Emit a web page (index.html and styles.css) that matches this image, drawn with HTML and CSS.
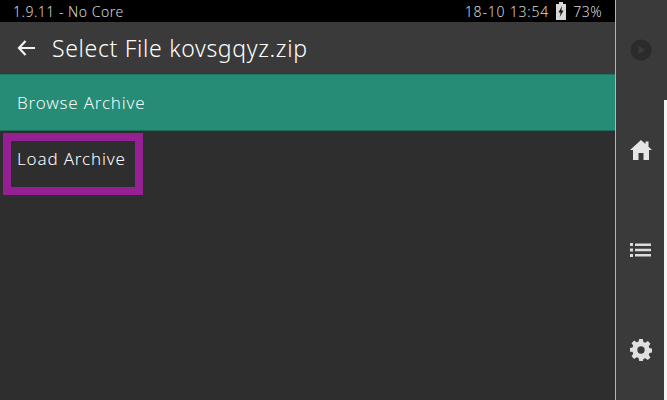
FILE: index.html
```html
<!DOCTYPE html>
<html lang="en">
<head>
  <meta charset="UTF-8">
  <title>Select File</title>
  <link rel="stylesheet" href="styles.css">
</head>
<body>
  <div class="main">
    <div class="status">
      <span>1.9.11 - No Core</span>
      <div class="status-right">
        <span class="clock">18-10 13:54</span>
        <svg class="battery" width="10" height="18" viewBox="0 0 10 18">
          <path d="M3 0h4v2h3v16H0V2h3z" fill="#d8d8d8"/>
          <path d="M6 4L2.500 10.500H4.600L3.800 15L7.500 8.500H5.300z" fill="#111"/>
        </svg>
        <span>73%</span>
      </div>
    </div>
    <div class="header">
      <svg class="back" width="18" height="16" viewBox="0 0 18 16">
        <path d="M18 8H2M8.500 1L2 8l6.500 7" fill="none" stroke="#f2f2f2" stroke-width="2.200"/>
      </svg>
      <span class="title">Select File kovsgqyz.zip</span>
    </div>
    <div class="row-selected">Browse Archive</div>
    <div class="list">
      <div class="row-focus">Load Archive</div>
    </div>
  </div>
  <div class="side">
    <div class="side-item play">
      <svg width="22" height="22" viewBox="0 0 22 22">
        <circle cx="11" cy="11" r="10.500" fill="#2b2b2b"/>
        <path d="M8.500 6.500v9l6.500-4.500z" fill="#3a3a3a"/>
      </svg>
    </div>
    <div class="side-item home">
      <svg width="22" height="20" viewBox="0 0 22 20">
        <path d="M11 0L0 10h3v10h5.500v-7h5v7H19V10h3l-3.500-3.200V1.500h-3v2.600z" fill="#e6e6e6"/>
      </svg>
    </div>
    <div class="side-item list-icon">
      <svg width="21" height="14" viewBox="0 0 21 14">
        <path d="M0 0h3v3H0zM0 5.500h3v3H0zM0 11h3v3H0zM5 .5h16v2.500H5zM5 5.800h16v2.500H5zM5 11h16v2.500H5z" fill="#dcdcdc"/>
      </svg>
    </div>
    <div class="side-item gear">
      <svg width="22" height="22" viewBox="0 0 24 24">
        <path fill="#e0e0e0" fill-rule="evenodd" d="M10 0h4l.6 3.300 2.100.9 2.800-1.900 2.800 2.800-1.900 2.800.9 2.100 3.300.6v4l-3.300.6-.9 2.100 1.900 2.800-2.800 2.800-2.800-1.900-2.100.9L14 24h-4l-.6-3.300-2.100-.9-2.800 1.900-2.800-2.800 1.900-2.800-.9-2.100L-.6 14v-4l3.300-.6.9-2.100L1.700 4.500l2.800-2.800 2.800 1.900 2.100-.9zM12 8a4 4 0 1 0 0 8 4 4 0 0 0 0-8z"/>
      </svg>
    </div>
    <div class="scrollbar"></div>
  </div>
</body>
</html>
```

FILE: styles.css
```css
html, body {
  margin: 0;
  height: 400px;
  overflow: hidden;
}

body {
  display: flex;
  font-family: "Noto Sans", sans-serif;
  font-weight: 300;
  color: #fff;
  background: #2e2e2e;
}

.main {
  width: 615px;
  height: 400px;
  display: flex;
  flex-direction: column;
}

.status {
  height: 22px;
  flex: none;
  background: #000;
  color: #d8d8d8;
  font-size: 14px;
  letter-spacing: 0.5px;
  padding: 0 13px;
  display: flex;
  align-items: center;
  justify-content: space-between;
}

.status-right {
  display: flex;
  align-items: center;
  gap: 7px;
}

.clock {
  letter-spacing: 0.8px;
}

.battery {
  display: block;
}

.header {
  height: 52px;
  flex: none;
  background: #3a3a3a;
  display: flex;
  align-items: center;
  padding-left: 17px;
  gap: 17px;
}

.back {
  display: block;
}

.title {
  font-size: 23px;
  letter-spacing: 0.67px;
}

.row-selected {
  height: 57px;
  flex: none;
  background: #268c75;
  border-top: 1px solid #1f7563;
  border-bottom: 1px solid #1f6b5a;
  box-sizing: border-box;
  display: flex;
  align-items: center;
  padding-left: 17px;
  font-size: 17px;
  letter-spacing: 0.8px;
  color: #effaf6;
}

.list {
  flex: 1;
  padding: 2px 0 0 3px;
}

.row-focus {
  width: 140px;
  height: 62px;
  box-sizing: border-box;
  border: 8px solid #952094;
  padding-left: 6px;
  padding-top: 4px;
  font-size: 17px;
  letter-spacing: 0.83px;
  line-height: 28px;
}

.side {
  position: relative;
  width: 52px;
  height: 400px;
  flex: none;
  box-sizing: border-box;
  background: #3a3a3a;
  border-left: 1px solid #b4b4b4;
}

.side-item {
  position: absolute;
  left: 14px;
  display: flex;
}

.play {
  top: 39px;
}

.home {
  top: 140px;
}

.list-icon {
  top: 243px;
}

.gear {
  top: 339px;
}

.scrollbar {
  position: absolute;
  right: 0;
  top: 100px;
  width: 3px;
  height: 300px;
  background: #f4f4f4;
}
```
